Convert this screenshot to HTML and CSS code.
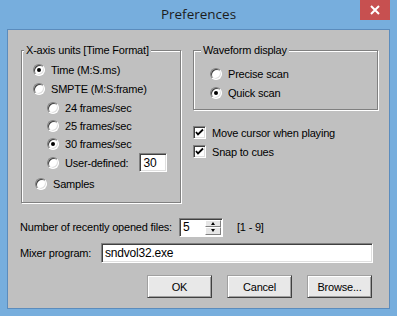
FILE: index.html
```html
<!DOCTYPE html>
<html>
<head>
    <title>Preferences</title>
    <link rel="stylesheet" href="styles.css">
</head>
<body>
    <div class="window">
        <div class="titlebar">
            <span class="title">Preferences</span>
            <div class="close">
                <svg width="12" height="10" viewBox="0 0 12 10">
                    <path d="M2 1 L10 9 M10 1 L2 9" stroke="#fff" stroke-width="2" fill="none"/>
                </svg>
            </div>
        </div>

        <div class="client">
            <div class="top">
                <!-- Unités de l'axe X -->
                <fieldset class="group units">
                    <legend>X-axis units [Time Format]</legend>
                    <div class="opt"><span class="radio checked"></span>Time (M:S.ms)</div>
                    <div class="opt"><span class="radio"></span>SMPTE (M:S:frame)</div>
                    <div class="sub">
                        <div class="opt small"><span class="radio"></span>24 frames/sec</div>
                        <div class="opt small"><span class="radio"></span>25 frames/sec</div>
                        <div class="opt small"><span class="radio checked"></span>30 frames/sec</div>
                        <div class="opt"><span class="radio"></span>User-defined:<span class="field fps">30</span></div>
                    </div>
                    <div class="opt samples"><span class="radio"></span>Samples</div>
                </fieldset>

                <div class="right">
                    <fieldset class="group wave">
                        <legend>Waveform display</legend>
                        <div class="opt"><span class="radio"></span>Precise scan</div>
                        <div class="opt"><span class="radio checked"></span>Quick scan</div>
                    </fieldset>

                    <div class="check first">
                        <span class="box">
                            <svg width="9" height="9" viewBox="0 0 9 9"><path d="M1 4 L3 6.5 L8 1.5" stroke="#000" stroke-width="1.8" fill="none"/></svg>
                        </span>Move cursor when playing
                    </div>
                    <div class="check">
                        <span class="box">
                            <svg width="9" height="9" viewBox="0 0 9 9"><path d="M1 4 L3 6.5 L8 1.5" stroke="#000" stroke-width="1.8" fill="none"/></svg>
                        </span>Snap to cues
                    </div>
                </div>
            </div>

            <div class="row recent">
                <span class="label recent-label">Number of recently opened files:</span>
                <div class="spin">
                    <span class="spin-value">5</span>
                    <div class="spin-btns">
                        <span class="spin-btn"><i class="arrow up"></i></span>
                        <span class="spin-btn"><i class="arrow down"></i></span>
                    </div>
                </div>
                <span class="range">[1 - 9]</span>
            </div>

            <div class="row mixer">
                <span class="label mixer-label">Mixer program:</span>
                <span class="field mixer-field">sndvol32.exe</span>
            </div>

            <div class="buttons">
                <button type="button">OK</button>
                <button type="button">Cancel</button>
                <button type="button">Browse...</button>
            </div>
        </div>
    </div>
</body>
</html>
```

FILE: styles.css
```css
html, body {
    margin: 0;
    padding: 0;
}

body {
    width: 397px;
    height: 316px;
    overflow: hidden;
    font-family: "Liberation Sans", Arial, sans-serif;
    font-size: 11px;
    letter-spacing: -0.2px;
    color: #000;
}

.window {
    width: 397px;
    height: 316px;
    box-sizing: border-box;
    background-color: #77aedd;
    padding: 0 7px 7px 7px;
    display: flex;
    flex-direction: column;
}

.titlebar {
    height: 29px;
    display: flex;
    justify-content: center;
    align-items: center;
    position: relative;
}

.title {
    font-family: "Open Sans", "Noto Sans", sans-serif;
    font-size: 13.5px;
    letter-spacing: 0;
    color: #1c1c1c;
    margin-top: -1px;
}

.close {
    position: absolute;
    top: 0;
    right: 0;
    width: 30px;
    height: 20px;
    background-color: #c75050;
    display: flex;
    justify-content: center;
    align-items: center;
}

.client {
    flex: 1;
    background-color: #c0c0c0;
    border: 1px solid #5b8cbd;
    padding: 14px 10px 0 13px;
}

.top {
    display: flex;
    gap: 12px;
}

/* Cadres gravés */

.group {
    margin: 0;
    border: 1px solid #808080;
    box-shadow: 1px 1px 0 #fff, inset 1px 1px 0 #fff;
    min-width: 0;
}

.group legend {
    background-color: #c0c0c0;
    padding: 0 2px;
    line-height: 13px;
}

.units {
    width: 160px;
    height: 159px;
    box-sizing: border-box;
    padding: 3px 0 0 11px;
}

.units legend {
    margin-left: -9px;
}

.wave {
    width: 185px;
    height: 66px;
    box-sizing: border-box;
    padding: 7px 0 0 16px;
}

.wave legend {
    margin-left: -9px;
}

.opt {
    display: flex;
    align-items: center;
    height: 19px;
}

.opt.small {
    height: 18px;
}

.sub {
    margin-top: 1px;
    padding-left: 14px;
}

.samples {
    margin-top: 2px;
    padding-left: 2px;
}

.radio {
    width: 12px;
    height: 12px;
    box-sizing: border-box;
    border-radius: 50%;
    background-color: #fff;
    border: 1px solid;
    border-color: #808080 #fff #fff #808080;
    box-shadow: inset 1px 1px 0 #404040, inset -1px -1px 0 #dfdfdf;
    margin-right: 6px;
    position: relative;
    flex: none;
}

.radio.checked::after {
    content: "";
    position: absolute;
    left: 3px;
    top: 3px;
    width: 4px;
    height: 4px;
    border-radius: 50%;
    background-color: #000;
}

.field {
    background-color: #fff;
    box-sizing: border-box;
    border: 1px solid;
    border-color: #808080 #fff #fff #808080;
    box-shadow: inset 1px 1px 0 #404040, inset -1px -1px 0 #dfdfdf;
    display: flex;
    align-items: center;
    padding-left: 3px;
    font-size: 12px;
}

.fps {
    width: 28px;
    height: 19px;
    margin-left: 11px;
}

/* Cases à cocher */

.check {
    display: flex;
    align-items: center;
    height: 19px;
}

.check.first {
    margin-top: 13px;
}

.box {
    width: 13px;
    height: 13px;
    box-sizing: border-box;
    background-color: #fff;
    border: 1px solid;
    border-color: #808080 #fff #fff #808080;
    box-shadow: inset 1px 1px 0 #404040, inset -1px -1px 0 #dfdfdf;
    margin-right: 6px;
    display: flex;
    justify-content: center;
    align-items: center;
    flex: none;
}

/* Lignes du bas */

.row {
    display: flex;
    align-items: center;
    margin-left: -1px;
}

.recent {
    margin-top: 14px;
    height: 20px;
}

.recent-label {
    width: 159px;
}

.spin {
    width: 44px;
    height: 19px;
    box-sizing: border-box;
    background-color: #fff;
    border: 1px solid;
    border-color: #808080 #fff #fff #808080;
    box-shadow: inset 1px 1px 0 #404040;
    display: flex;
    padding: 1px 1px 1px 2px;
}

.spin-value {
    flex: 1;
    font-size: 12px;
    display: flex;
    align-items: center;
    padding-left: 1px;
}

.spin-btns {
    width: 16px;
    display: flex;
    flex-direction: column;
}

.spin-btn {
    flex: 1;
    background-color: #e6e6e6;
    border: 1px solid;
    border-color: #fff #808080 #808080 #fff;
    display: flex;
    justify-content: center;
    align-items: center;
}

.arrow {
    width: 0;
    height: 0;
    border-left: 2.5px solid transparent;
    border-right: 2.5px solid transparent;
}

.arrow.up {
    border-bottom: 3px solid #000;
}

.arrow.down {
    border-top: 3px solid #000;
}

.range {
    margin-left: 14px;
}

.mixer {
    margin-top: 6px;
    height: 20px;
}

.mixer-label {
    width: 81px;
}

.mixer-field {
    width: 272px;
    height: 20px;
}

.buttons {
    display: flex;
    justify-content: flex-end;
    gap: 15px;
    margin-top: 12px;
    padding-right: 7px;
}

button {
    width: 65px;
    height: 23px;
    font-family: "Liberation Sans", Arial, sans-serif;
    font-size: 11px;
    letter-spacing: -0.2px;
    color: #000;
    background-color: #e8e8e8;
    border: 1px solid;
    border-color: #a0a0a0 #404040 #404040 #a0a0a0;
    box-shadow: inset 1px 1px 0 #fff, inset -1px -1px 0 #a0a0a0;
    padding: 0;
}
```
